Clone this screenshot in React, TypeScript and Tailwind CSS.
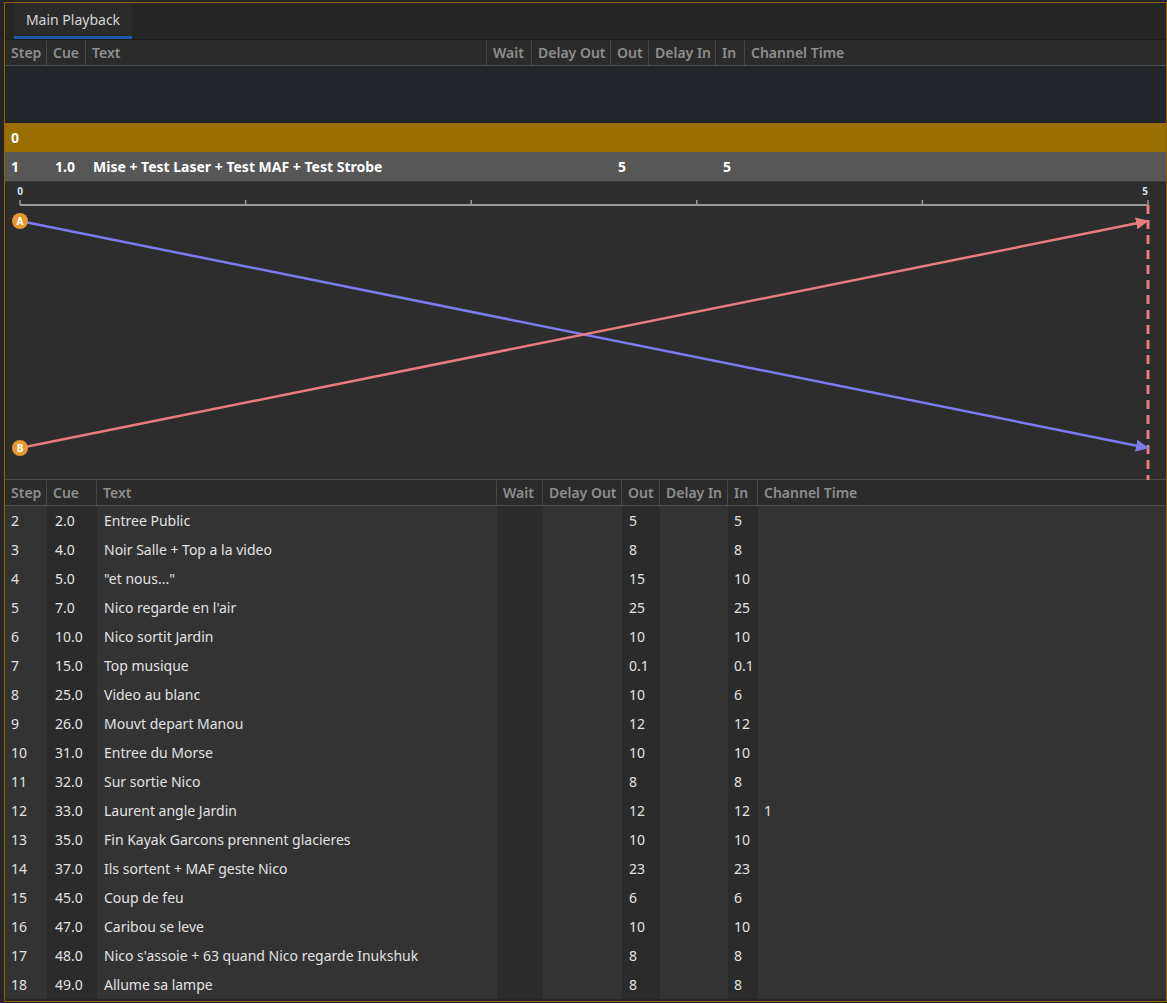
import React from 'react';

const topW = ['w-[42px]', 'w-[39px]', 'w-[401px]', 'w-[45px]', 'w-[79px]', 'w-[38px]', 'w-[67px]', 'w-[29px]', 'flex-1'];
const bottomW = ['w-[42px]', 'w-[50px]', 'w-[400px]', 'w-[46px]', 'w-[79px]', 'w-[38px]', 'w-[68px]', 'w-[30px]', 'flex-1'];
const headers = ['Step', 'Cue', 'Text', 'Wait', 'Delay Out', 'Out', 'Delay In', 'In', 'Channel Time'];
// alternating column shading in the cue list
const shade = ['bg-[#333333]', 'bg-[#2b2b2b]', 'bg-[#333333]', 'bg-[#2b2b2b]', 'bg-[#333333]', 'bg-[#2b2b2b]', 'bg-[#333333]', 'bg-[#2b2b2b]', 'bg-[#333333]'];
const pad = ['pl-[6px]', 'pl-[8px]', 'pl-[7px]', 'pl-[7px]', 'pl-[7px]', 'pl-[7px]', 'pl-[7px]', 'pl-[6px]', 'pl-[6px]'];

type Cue = { step: string; cue: string; text: string; out: string; inn: string; ch?: string };

const cues: Cue[] = [
  { step: '2', cue: '2.0', text: 'Entree Public', out: '5', inn: '5' },
  { step: '3', cue: '4.0', text: 'Noir Salle + Top a la video', out: '8', inn: '8' },
  { step: '4', cue: '5.0', text: '"et nous..."', out: '15', inn: '10' },
  { step: '5', cue: '7.0', text: "Nico regarde en l'air", out: '25', inn: '25' },
  { step: '6', cue: '10.0', text: 'Nico sortit Jardin', out: '10', inn: '10' },
  { step: '7', cue: '15.0', text: 'Top musique', out: '0.1', inn: '0.1' },
  { step: '8', cue: '25.0', text: 'Video au blanc', out: '10', inn: '6' },
  { step: '9', cue: '26.0', text: 'Mouvt depart Manou', out: '12', inn: '12' },
  { step: '10', cue: '31.0', text: 'Entree du Morse', out: '10', inn: '10' },
  { step: '11', cue: '32.0', text: 'Sur sortie Nico', out: '8', inn: '8' },
  { step: '12', cue: '33.0', text: 'Laurent angle Jardin', out: '12', inn: '12', ch: '1' },
  { step: '13', cue: '35.0', text: 'Fin Kayak Garcons prennent glacieres', out: '10', inn: '10' },
  { step: '14', cue: '37.0', text: 'Ils sortent + MAF geste Nico', out: '23', inn: '23' },
  { step: '15', cue: '45.0', text: 'Coup de feu', out: '6', inn: '6' },
  { step: '16', cue: '47.0', text: 'Caribou se leve', out: '10', inn: '10' },
  { step: '17', cue: '48.0', text: "Nico s'assoie + 63 quand Nico regarde Inukshuk", out: '8', inn: '8' },
  { step: '18', cue: '49.0', text: 'Allume sa lampe', out: '8', inn: '8' },
];

function HeaderRow({ widths }: { widths: string[] }) {
  return (
    <div className="flex h-[26px] border-b border-[#4e4e4e] bg-[#2b2b2b] text-[14px] font-semibold text-[#8e8e8e]">
      {headers.map((h, i) => (
        <div
          key={h}
          className={`flex items-center pl-[6px] whitespace-nowrap ${widths[i]} ${i < headers.length - 1 ? 'border-r border-[#484848]' : ''}`}
        >
          {h}
        </div>
      ))}
    </div>
  );
}

function Timeline() {
  const ticks = [0, 1, 2, 3, 4, 5].map((i) => 15 + i * 225.6);
  return (
    <div className="h-[298px] bg-[#2d2d2d] border-b border-[#4a4a4a] font-['Noto_Sans',sans-serif]">
      <svg width="1160" height="298" viewBox="0 0 1160 298">
        <defs>
          <marker id="arrBlue" markerWidth="13" markerHeight="12" refX="12" refY="6" orient="auto" markerUnits="userSpaceOnUse">
            <path d="M0,0 L13,6 L0,12 z" fill="#7c7cef" />
          </marker>
          <marker id="arrRed" markerWidth="13" markerHeight="12" refX="12" refY="6" orient="auto" markerUnits="userSpaceOnUse">
            <path d="M0,0 L13,6 L0,12 z" fill="#e77c80" />
          </marker>
        </defs>
        <line x1="15" y1="23" x2="1143" y2="23" stroke="#9a9a9a" strokeWidth="2" />
        {ticks.map((x) => (
          <line key={x} x1={x} y1="18" x2={x} y2="23" stroke="#9a9a9a" strokeWidth="1.5" />
        ))}
        <text x="15" y="13" textAnchor="middle" fontSize="10" fontWeight="700" fill="#d5e4f2">0</text>
        <text x="1140" y="13" textAnchor="middle" fontSize="10" fontWeight="700" fill="#d5e4f2">5</text>
        <line x1="1143" y1="23" x2="1143" y2="298" stroke="#e77c80" strokeWidth="3" strokeDasharray="9 6" />
        <line x1="15" y1="39" x2="1143" y2="266" stroke="#7c7cef" strokeWidth="2.5" markerEnd="url(#arrBlue)" />
        <line x1="15" y1="266" x2="1143" y2="39" stroke="#e77c80" strokeWidth="2.5" markerEnd="url(#arrRed)" />
        <circle cx="15" cy="39" r="8" fill="#e8982f" />
        <text x="15" y="42.5" textAnchor="middle" fontSize="10" fontWeight="700" fill="#fff">A</text>
        <circle cx="15" cy="266" r="8" fill="#e8982f" />
        <text x="15" y="269.5" textAnchor="middle" fontSize="10" fontWeight="700" fill="#fff">B</text>
      </svg>
    </div>
  );
}

export default function App() {
  return (
    <div className="w-[1167px] h-[1003px] bg-[#252525] pt-[2px] pl-[4px] font-['Noto_Sans','Open_Sans',sans-serif]">
      <div className="w-[1163px] h-[1000px] border border-[#8d6500] bg-[#262626] flex flex-col overflow-hidden">
        {/* tab bar */}
        <div className="h-[37px] flex items-end pl-[9px] border-b border-[#1c1c1c]">
          <div className="w-[118px] h-[36px] bg-[#2b2b2b] border-b-[3px] border-[#1f5aa6] flex items-center justify-center text-[14px] text-[#d6d6d6]">
            Main Playback
          </div>
        </div>

        <HeaderRow widths={topW} />

        <div className="h-[57px] bg-[#22262a]" />

        <div className="h-[29px] bg-[#9a6e00] flex items-center pl-[6px] text-[14px] font-bold text-white">0</div>

        <div className="h-[30px] bg-[#575757] border-b border-[#3a3a3a] flex items-center text-[14px] font-bold text-white">
          <div className="w-[42px] pl-[6px]">1</div>
          <div className="w-[39px] pl-[8px]">1.0</div>
          <div className="w-[525px] pl-[7px] whitespace-nowrap">Mise + Test Laser + Test MAF + Test Strobe</div>
          <div className="w-[105px] pl-[7px]">5</div>
          <div className="w-[29px] pl-[7px]">5</div>
        </div>

        <Timeline />

        <HeaderRow widths={bottomW} />

        <div className="flex-1">
          {cues.map((c) => {
            const cells = [c.step, c.cue, c.text, '', '', c.out, '', c.inn, c.ch ?? ''];
            return (
              <div key={c.step} className="flex h-[29px] text-[14px] text-[#e2e2e2]">
                {cells.map((v, i) => (
                  <div key={i} className={`flex items-center whitespace-nowrap ${shade[i]} ${pad[i]} ${bottomW[i]}`}>
                    {v}
                  </div>
                ))}
              </div>
            );
          })}
        </div>
      </div>
    </div>
  );
}
